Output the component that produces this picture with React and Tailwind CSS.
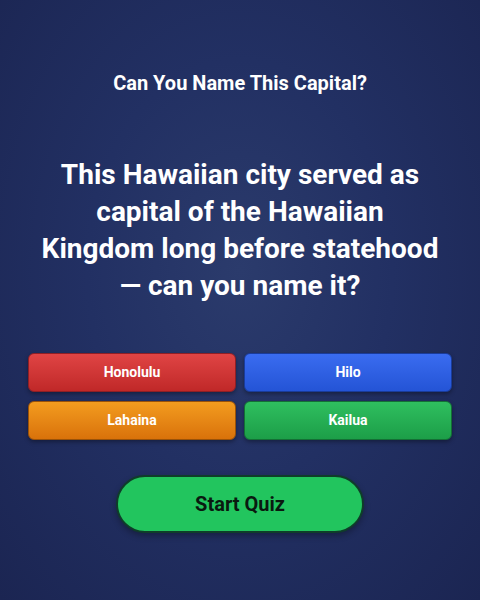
const options = [
  { label: "Honolulu", cls: "bg-gradient-to-b from-[#e04444] to-[#c02828] border-[#8f1f25]" },
  { label: "Hilo", cls: "bg-gradient-to-b from-[#3a6cf0] to-[#2454d6] border-[#1a3c9a]" },
  { label: "Lahaina", cls: "bg-gradient-to-b from-[#f39c1f] to-[#d9720a] border-[#9a5208]" },
  { label: "Kailua", cls: "bg-gradient-to-b from-[#2fbf5f] to-[#1c9e48] border-[#137035]" },
]

export default function App() {
  return (
    <div
      className="w-[480px] h-[600px] flex flex-col items-center bg-[radial-gradient(ellipse_at_50%_45%,#2b3b6c_0%,#223063_45%,#1b2552_100%)] text-white"
      style={{ fontFamily: "Roboto, 'Noto Sans', sans-serif" }}
    >
      <h2 className="mt-[69px] text-[20px] leading-[28px] font-bold">Can You Name This Capital?</h2>

      <h1 className="mt-[59px] w-[402px] text-center text-[28px] leading-[37px] font-bold">
        This Hawaiian city served as capital of the Hawaiian Kingdom long before statehood — can you name it?
      </h1>

      {/* answer grid */}
      <div className="mt-[49px] w-[424px] grid grid-cols-2 gap-x-2 gap-y-[9px]">
        {options.map((o) => (
          <button
            key={o.label}
            className={`h-[39px] rounded-[6px] border text-[14px] font-bold text-white shadow-[0_2px_4px_rgba(0,0,0,0.35)] ${o.cls}`}
          >
            {o.label}
          </button>
        ))}
      </div>

      <button className="mt-[35px] w-[248px] h-[58px] rounded-full bg-[#22c55e] border-2 border-[#0f3d2a] text-[20px] font-bold text-[#0a1a10] shadow-[0_3px_6px_rgba(0,0,0,0.3)]">
        Start Quiz
      </button>
    </div>
  )
}
